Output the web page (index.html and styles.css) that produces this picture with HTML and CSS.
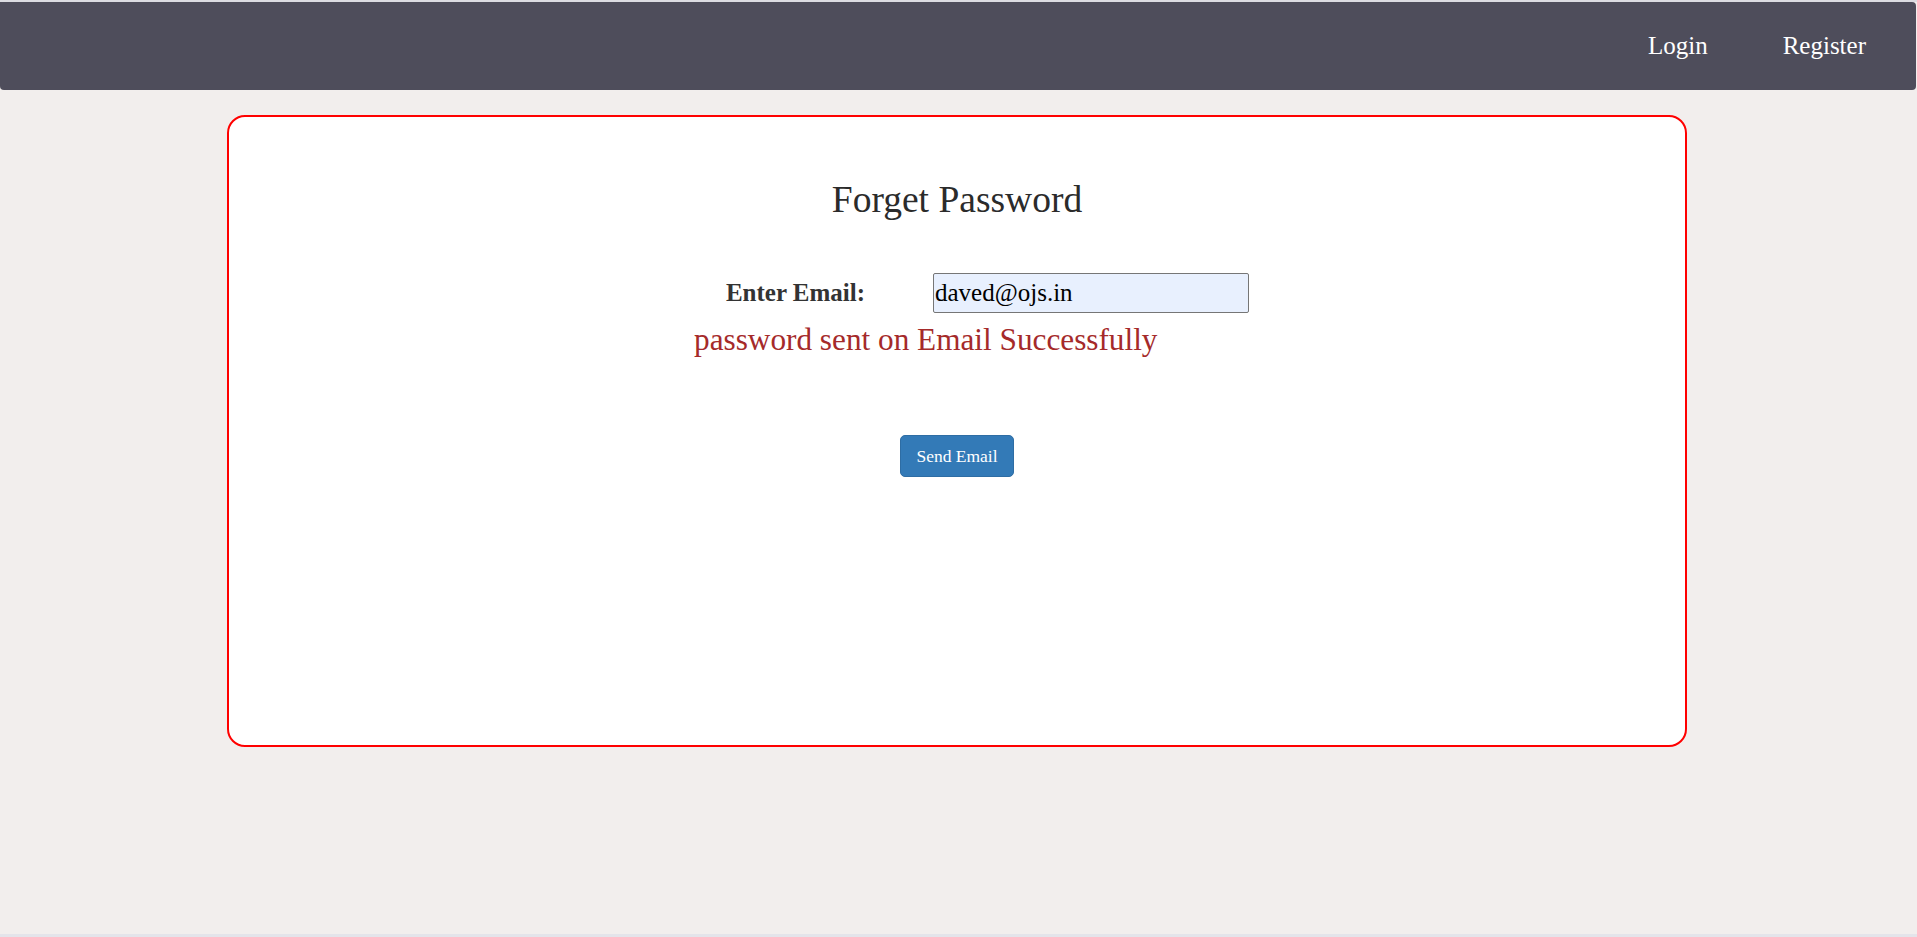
FILE: index.html
```html
<!DOCTYPE html>
<html lang="en">
<head>
<meta charset="utf-8">
<title>Forget Password</title>
<link rel="stylesheet" href="styles.css">
</head>
<body>
<div class="page">
  <nav class="navbar">
    <a class="nav-link" href="#">Login</a>
    <a class="nav-link" href="#">Register</a>
  </nav>
  <main class="main">
    <div class="card">
      <h2 class="title">Forget Password</h2>
      <form class="form">
        <div class="row">
          <label class="label" for="email">Enter Email:</label>
          <input class="input" id="email" type="text" value="daved@ojs.in">
        </div>
        <div class="message">password sent on Email Successfully</div>
        <div class="actions">
          <button class="btn" type="button">Send Email</button>
        </div>
      </form>
    </div>
  </main>
  <div class="bottom-strip"></div>
</div>
</body>
</html>
```

FILE: styles.css
```css
* { box-sizing: border-box; }
html, body { margin: 0; padding: 0; }
body {
  background: #f2eeed;
  font-family: "Liberation Serif", "Times New Roman", serif;
  color: #333;
}
.page {
  height: 937px;
  display: flex;
  flex-direction: column;
  border-top: 2px solid #dcdce2;
}
.navbar {
  height: 88px;
  margin-right: 1px;
  background: #4e4d5b;
  border-radius: 0 4px 4px 4px;
  display: flex;
  align-items: center;
  justify-content: flex-end;
  gap: 75px;
  padding-right: 50px;
}
.nav-link {
  color: #fff;
  text-decoration: none;
  font-size: 25px;
}
.main {
  flex: 1;
}
.card {
  width: 1460px;
  height: 632px;
  margin: 25px 0 0 227px;
  background: #fff;
  border: 2px solid #ff0000;
  border-radius: 18px;
  display: flex;
  flex-direction: column;
  align-items: center;
}
.title {
  margin: 62px 0 0;
  font-size: 37.5px;
  line-height: 41px;
  font-weight: normal;
  color: #2b2b2b;
}
.form {
  width: 598px;
  margin-top: 53px;
  display: flex;
  flex-direction: column;
}
.row {
  display: grid;
  grid-template-columns: 275px 323px;
  align-items: center;
}
.label {
  text-align: center;
  font-weight: bold;
  font-size: 25px;
  color: #333;
}
.input {
  width: 316px;
  height: 40px;
  font-family: "Liberation Serif", "Times New Roman", serif;
  font-size: 25px;
  color: #000;
  background: #e8f0fe;
  border: 1px solid #767676;
  border-radius: 2px;
  padding: 0 1px;
}
.message {
  margin-top: 10px;
  padding-left: 36px;
  font-size: 31.25px;
  line-height: 34px;
  color: #a52a2a;
}
.actions {
  margin-top: 78px;
  display: flex;
  justify-content: center;
}
.btn {
  width: 114px;
  height: 42px;
  background: #337ab7;
  border: 1px solid #2e6da4;
  border-radius: 5px;
  color: #fff;
  font-family: "Liberation Serif", "Times New Roman", serif;
  font-size: 17.5px;
  padding: 0;
}
.bottom-strip {
  height: 3px;
  background: #e4e4ea;
}
```
